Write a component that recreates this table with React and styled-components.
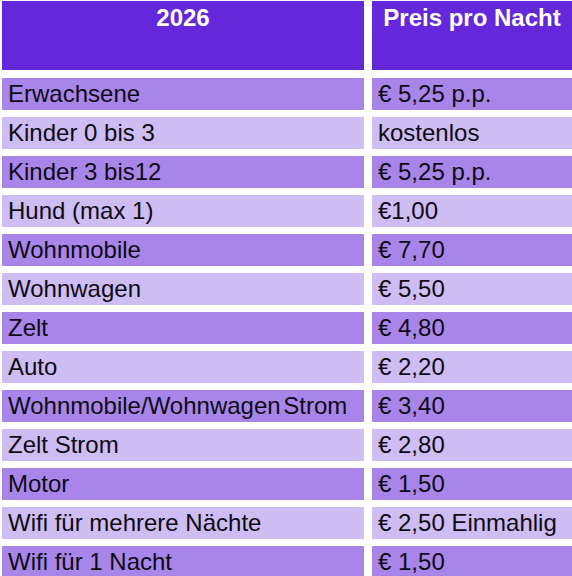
import styled, { createGlobalStyle } from 'styled-components'

const GlobalStyle = createGlobalStyle`
    html, body {
        margin: 0;
        padding: 0;
        background: #ffffff;
    }
    body {
        font-family: 'Liberation Sans', Arial, sans-serif;
    }
`

const Table = styled.div`
    display: grid;
    grid-template-columns: 362px 200px;
    column-gap: 8px;
    row-gap: 7px;
    padding: 1px 0 0 2px;
`

const HeadCell = styled.div`
    height: 69px;
    margin-bottom: 1px;
    background-color: #6428da;
    color: #ffffff;
    font-weight: 700;
    font-size: 24px;
    text-align: center;
    padding-top: 3px;
    box-sizing: border-box;
    white-space: nowrap;
`

const Cell = styled.div`
    height: 32px;
    display: flex;
    align-items: center;
    padding-left: 6px;
    font-size: 24px;
    color: #0d0a14;
    white-space: nowrap;
    overflow: hidden;
    word-spacing: ${(props) => (props.$tight ? '-4px' : 'normal')};
    background-color: ${(props) => (props.$dark ? '#a886e9' : '#cebdf2')};
`

const rows = [
    ['Erwachsene', '€ 5,25 p.p.'],
    ['Kinder 0 bis 3', 'kostenlos'],
    ['Kinder 3 bis12', '€ 5,25 p.p.'],
    ['Hund (max 1)', '€1,00'],
    ['Wohnmobile', '€ 7,70'],
    ['Wohnwagen', '€ 5,50'],
    ['Zelt', '€ 4,80'],
    ['Auto', '€ 2,20'],
    ['Wohnmobile/Wohnwagen Strom', '€ 3,40'],
    ['Zelt Strom', '€ 2,80'],
    ['Motor', '€ 1,50'],
    ['Wifi für mehrere Nächte', '€ 2,50 Einmahlig'],
    ['Wifi für 1 Nacht', '€ 1,50'],
]

export default function App() {
    return (
        <>
            <GlobalStyle />
            <Table>
                <HeadCell>2026</HeadCell>
                <HeadCell>Preis pro Nacht</HeadCell>
                {rows.map(([label, price], index) => (
                    <>
                        <Cell
                            key={'l' + index}
                            $dark={index % 2 === 0}
                            $tight={label.length > 24}
                        >
                            {label}
                        </Cell>
                        <Cell key={'p' + index} $dark={index % 2 === 0}>
                            {price}
                        </Cell>
                    </>
                ))}
            </Table>
        </>
    )
}
